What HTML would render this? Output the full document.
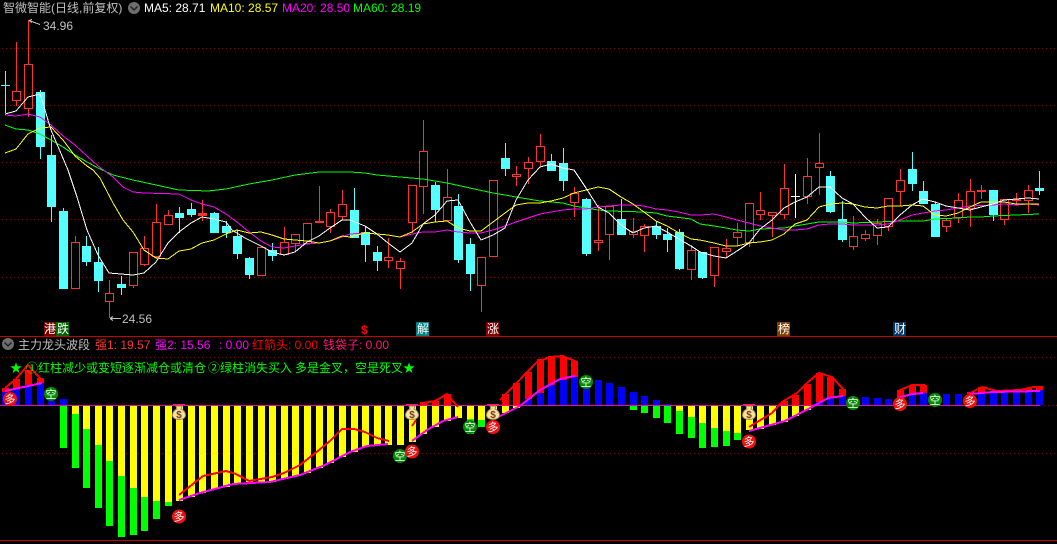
<!DOCTYPE html>
<html><head><meta charset="utf-8"><title>K线</title>
<style>
html,body{margin:0;padding:0;background:#000;width:1057px;height:544px;overflow:hidden}
svg{display:block}
text{font-family:"Liberation Sans","WenQuanYi Zen Hei","Noto Sans CJK SC",sans-serif;font-size:12px}
.c text,text.c{text-anchor:middle}
</style></head><body>
<svg width="1057" height="544" viewBox="0 0 1057 544" xmlns="http://www.w3.org/2000/svg">
<rect width="1057" height="544" fill="#000"/>
<!-- grid -->
<g stroke="#8b0000" stroke-width="1" stroke-dasharray="1 3" shape-rendering="crispEdges" fill="none">
<path d="M2 48.5H1057M2 105.5H1057M2 162.5H1057M2 219.5H1057M2 277.5H1057M2 357.5H1057M2 453.5H1057M1040 405.5H1057"/>
</g>
<g shape-rendering="crispEdges">
<!-- red candles -->
<path fill="none" stroke="#ff3232" d="M16.5 42V91M16.5 101V106M28.5 20V64M28.5 109V117M75.5 236V242M109.5 280V293M109.5 302V318M133.5 286V288M144.5 236V248M144.5 265V266M156.5 204V222M156.5 257V259M168.5 210V215M202.5 200V221M284.5 227V242M295.5 244V252M319.5 186V221M330.5 209V212M330.5 227V233M342.5 190V204M342.5 217V220M388.5 238V257M388.5 261V268M400.5 258V261M400.5 269V289M412.5 223V233M423.5 120V151M423.5 187V214M447.5 169V197M481.5 286V312M516.5 166V174M516.5 177V186M528.5 157V162M528.5 169V184M540.5 134V146M540.5 162V167M574.5 187V193M574.5 203V217M598.5 205V240M598.5 243V251M609.5 235V260M633.5 218V231M633.5 235V238M644.5 224V226M644.5 236V252M691.5 245V250M691.5 270V280M714.5 276V287M726.5 239V248M726.5 252V257M737.5 223V232M737.5 238V246M749.5 243V247M760.5 192V210M760.5 215V220M772.5 216V237M784.5 164V188M784.5 215V219M807.5 158V176M807.5 197V204M819.5 133V163M819.5 168V195M853.5 216V236M853.5 247V250M865.5 230V234M865.5 239V241M877.5 219V223M877.5 236V245M888.5 227V231M900.5 169V180M900.5 192V206M946.5 218V220M946.5 227V232M958.5 193V200M958.5 218V223M970.5 179V191M970.5 209V227M981.5 185V199M1004.5 220V225M1016.5 193V199M1016.5 201V205M1028.5 185V190M1028.5 201V213"/>
<path fill="#000" stroke="#ff3232" d="M12.5 91.5h8v9h-8zM24.5 64.5h8v44h-8zM71.5 242.5h8v46h-8zM105.5 293.5h8v8h-8zM129.5 252.5h8v33h-8zM140.5 248.5h8v16h-8zM152.5 222.5h8v34h-8zM164.5 215.5h8v9h-8zM257.5 247.5h8v28h-8zM280.5 242.5h8v12h-8zM291.5 234.5h8v9h-8zM303.5 223.5h8v20h-8zM315.5 221.5h8v1h-8zM326.5 212.5h8v14h-8zM338.5 204.5h8v12h-8zM384.5 257.5h8v3h-8zM396.5 261.5h8v7h-8zM408.5 185.5h8v37h-8zM419.5 151.5h8v35h-8zM443.5 197.5h8v23h-8zM477.5 257.5h8v28h-8zM489.5 180.5h8v76h-8zM512.5 174.5h8v2h-8zM524.5 162.5h8v6h-8zM536.5 146.5h8v15h-8zM570.5 193.5h8v9h-8zM594.5 240.5h8v2h-8zM605.5 206.5h8v28h-8zM629.5 231.5h8v3h-8zM640.5 226.5h8v9h-8zM687.5 250.5h8v19h-8zM710.5 247.5h8v28h-8zM722.5 248.5h8v3h-8zM733.5 232.5h8v5h-8zM745.5 203.5h8v39h-8zM756.5 210.5h8v4h-8zM768.5 212.5h8v3h-8zM780.5 188.5h8v26h-8zM803.5 176.5h8v20h-8zM815.5 163.5h8v4h-8zM849.5 236.5h8v10h-8zM861.5 234.5h8v4h-8zM873.5 223.5h8v12h-8zM884.5 198.5h8v28h-8zM896.5 180.5h8v11h-8zM942.5 220.5h8v6h-8zM954.5 200.5h8v17h-8zM966.5 191.5h8v17h-8zM1000.5 199.5h8v20h-8zM1012.5 199.5h8v1h-8zM1024.5 190.5h8v10h-8z"/>
<path fill="#ff3232" d="M198 213h9v3h-9zM977 190h9v2h-9z"/>
<!-- cyan candles -->
<path fill="none" stroke="#54ffff" d="M5.5 71V113M40.5 90V159M51.5 135V222M63.5 208V211M86.5 236V266M98.5 247V292M121.5 276V295M179.5 207V233M191.5 203V217M214.5 212V233M226.5 221V238M237.5 230V259M249.5 257V279M272.5 243V261M354.5 188V238M365.5 227V262M377.5 246V271M435.5 182V222M458.5 194V263M470.5 238V291M505.5 143V176M551.5 154V171M563.5 148V191M586.5 198V256M621.5 199V235M656.5 221V239M667.5 228V252M679.5 229V270M702.5 252V279M830.5 171V213M842.5 201V242M912.5 152V191M923.5 181V204M935.5 202V237M993.5 190V221M1039.5 171V195"/>
<path fill="#54ffff" d="M1 85h9v1H1zM36 92h9v55h-9zM47 155h9v52h-9zM59 211h9v78h-9zM82 246h9v16h-9zM94 262h9v19h-9zM117 284h9v4h-9zM175 213h9v5h-9zM187 209h9v6h-9zM210 213h9v20h-9zM222 226h9v7h-9zM233 236h9v18h-9zM245 258h9v17h-9zM268 250h9v6h-9zM350 210h9v28h-9zM361 232h9v13h-9zM373 252h9v9h-9zM431 185h9v25h-9zM454 206h9v54h-9zM466 244h9v30h-9zM501 158h9v11h-9zM547 161h9v10h-9zM559 163h9v18h-9zM582 199h9v55h-9zM617 219h9v16h-9zM652 226h9v9h-9zM663 234h9v6h-9zM675 232h9v37h-9zM698 252h9v26h-9zM826 176h9v36h-9zM838 219h9v21h-9zM908 169h9v15h-9zM919 191h9v13h-9zM931 204h9v33h-9zM989 190h9v25h-9zM1035 188h9v3h-9z"/>
<path fill="none" stroke="#fff" d="M795.5 174V218M791 196.500h9"/>
<!-- MAs -->
<g fill="none" stroke-width="1">
<polyline stroke="#00ff00" points="5,125 16,129 28,130 40,134 51,140 63,147 75,155 87,162 98,168 113,175 133,180 156,185 179,190 208,191 226,189 249,184 272,180 295,175 319,172 350,172 365,173 377,175 400,177 423,179 435,181 447,183 470,188 493,193 505,195 516,197 528,199 540,201 563,203 574,206 586,208 598,210 609,211 644,212 656,213 667,216 691,219 700,224 714,226 726,228 737,230 749,231 760,229 784,228 795,226 807,224 819,222 842,222 853,223 877,222 900,221 923,221 935,219 958,218 970,217 981,217 993,216 1039,214"/>
<polyline stroke="#ff00ff" points="5,115 16,116 28,114 40,117 51,125 63,136 75,145 87,156 98,166 113,177 123,187 133,192 144,193 179,194 191,200 202,204 214,207 226,214 237,222 249,232 261,241 272,247 284,248 295,246 307,244 319,243 330,241 342,237 350,234 365,233 377,234 388,235 400,237 412,234 423,232 435,232 447,230 458,232 470,233 481,233 493,230 505,226 516,222 528,218 540,214 551,212 563,210 574,209 586,209 598,207 609,206 621,205 633,205 644,206 656,209 667,210 679,212 691,215 700,215 714,214 726,217 737,220 749,223 760,226 772,228 784,230 795,230 807,229 819,225 830,224 842,224 853,225 877,225 888,224 900,220 912,215 923,213 935,211 946,210 958,208 970,206 993,205 1004,204 1016,205 1028,204 1039,205"/>
<polyline stroke="#ffff00" points="5,153 16,149 28,134 40,128 51,127 63,140 75,156 87,166 93,170 100,178 113,203 123,220 133,232 144,250 156,258 168,259 179,251 191,249 202,243 214,240 226,234 237,230 249,233 261,232 272,235 284,239 295,240 307,241 319,243 330,241 342,236 350,237 365,233 377,234 388,235 400,237 412,232 423,224 435,222 447,221 458,228 470,231 481,231 493,222 505,213 516,205 528,203 540,203 551,201 563,198 574,193 586,190 598,187 609,189 621,197 633,204 644,212 656,221 667,226 679,233 691,239 700,240 714,243 726,246 737,246 749,243 760,242 772,240 784,234 795,224 807,220 819,207 830,204 842,203 853,204 865,207 877,208 888,206 900,206 912,205 923,206 935,215 946,216 958,213 970,207 981,202 993,202 1004,202 1016,204 1028,204 1039,204"/>
<polyline stroke="#ffffff" points="5,114 16,111 28,97 40,94 45,110 51,130 68,170 77,197 87,230 98,255 109,273 133,275 144,273 156,262 168,243 179,232 191,223 202,217 214,219 226,222 232,230 245,238 261,246 272,252 284,255 295,252 307,242 319,236 330,228 342,220 350,220 365,226 377,234 388,243 400,252 412,243 423,224 435,215 447,201 458,200 470,222 481,240 493,235 505,228 516,200 528,180 540,167 551,164 563,168 574,170 586,188 598,207 609,213 621,225 633,233 644,228 656,226 667,232 679,239 691,246 700,252 714,256 726,258 737,251 749,243 760,229 772,220 784,208 795,202 807,197 819,187 830,187 842,198 853,204 865,217 877,228 888,227 900,215 912,205 923,199 935,202 946,206 958,208 970,210 981,207 993,204 1004,200 1016,199 1028,198 1039,199"/>
</g>
<!-- panel lines -->
<rect x="0" y="336" width="1057" height="1" fill="#c80000"/>
<rect x="0" y="540" width="1057" height="1" fill="#c80000"/>
<!-- sub bars -->
<g fill="none" stroke-width="7">
<path stroke="#00ff00" d="M63.5 405V448M75.500 405V468M86.500 405V488M98.500 405V508M109.500 405V526M121.500 405V537M133.500 405V535M144.500 405V531M156.500 405V519M168.500 405V506M470.500 405V434M481.500 405V427M633.500 405V410M644.500 405V413M656.500 405V418M667.500 405V423M679.500 405V434M691.500 405V438M702.500 405V448M714.500 405V447M726.500 405V446M737.500 405V440"/>
<path stroke="#ffff00" d="M75.500 405V414M86.500 405V429M98.500 405V445M109.500 405V461M121.500 405V476M133.500 405V488M144.500 405V497M156.500 405V501M168.500 405V502M179.500 405V501M191.500 405V497M202.500 405V493M214.500 405V489M226.500 405V487M237.500 405V483M249.500 405V482M261.500 405V482M272.500 405V482M284.500 405V479M295.500 405V476M307.500 405V473M319.500 405V468M330.500 405V463M342.500 405V457M354.500 405V452M365.500 405V447M377.500 405V445M388.500 405V445M400.500 405V445M412.500 405V442M423.500 405V434M435.500 405V427M447.500 405V421M458.500 405V418M470.500 405V419M481.500 405V420M493.500 405V417M505.500 405V413M516.500 405V408M679.500 405V411M691.500 405V417M702.500 405V423M714.500 405V428M726.500 405V431M737.500 405V433M749.500 405V430M760.500 405V429M772.500 405V425M784.500 405V422M795.500 405V416M807.500 405V410"/>
<path stroke="#0000ff" d="M5.500 405V392M16.500 405V389M28.500 405V385M40.500 405V383M51.500 405V401M63.500 405V399M528.500 405V399M540.500 405V393M551.500 405V385M563.500 405V380M574.500 405V377M586.500 405V383M598.500 405V380M609.500 405V383M621.500 405V387M633.500 405V392M644.500 405V396M656.500 405V400M667.500 405V404M819.500 405V402M830.500 405V398M842.500 405V396M853.500 405V397M865.500 405V397M877.500 405V398M888.500 405V399M900.500 405V398M912.500 405V395M923.500 405V393M935.500 405V394M946.500 405V394M958.500 405V394M970.500 405V394M981.500 405V393M993.500 405V393M1004.500 405V392M1016.500 405V392M1028.500 405V391M1039.500 405V390"/>
<path stroke="#ff0000" d="M5.500 388V392M16.500 379V389M28.500 370V385M40.500 378V383M423.500 402V405M435.500 401V405M447.500 394V405M505.500 394V405M516.500 383V405M528.500 372V399M540.500 359V393M551.500 356V385M563.500 357V380M574.500 361V377M784.500 401V405M795.500 395V405M807.500 384V405M819.500 373V402M830.500 377V398M842.500 389V396M900.500 390V398M912.500 386V395M923.500 385V393M970.500 392V394M981.500 387V393M993.500 391V393M1004.500 391V392M1016.500 390V392M1028.500 388V391M1039.500 387V390"/>
</g>
<rect x="0" y="405" width="1040" height="1" fill="#e0148c"/>
<!-- thick lines -->
<g fill="none" stroke="#ff0000" stroke-width="2">
<polyline points="5,388 16,379 28,365 40,378 44,382"/>
<polyline points="179,495 203,476 226,471 236,474 249,481 272,477 284,473 300,465 319,450 330,441 342,429 354,429 365,432 377,438 389,441"/>
<polyline points="412,426 416,420"/>
<polyline points="420,405 423,403 435,401 447,394 458,407"/>
<polyline points="500,400 537,362 550,357 563,356 577,362"/>
<polyline points="749,427 772,413 782,402 797,393 808,382 819,373 832,377 844,390"/>
<polyline points="898,391 912,385 925,385"/>
<polyline points="970,393 982,387 997,391 1020,390 1033,387 1043,387"/>
</g>
<g fill="none" stroke="#ff00ff" stroke-width="2">
<polyline points="5,391 42,383"/>
<polyline points="179,500 200,493 233,484 270,482 300,475 325,465 350,452 367,446 388,444"/>
<polyline points="412,441 427,430 443,421 458,417"/>
<polyline points="493,419 500,416 520,406 540,390 560,379 575,376"/>
<polyline points="749,431 785,421 810,408 828,398 843,396"/>
<polyline points="898,398 912,394 923,393"/>
<polyline points="970,394 993,392 1040,391"/>
</g>
<!-- extrema arrows -->
<path fill="none" stroke="#c0c0c0" d="M29 20.500L40 24.500M29 20.500l3 -1M29 20.500l3 2M110 318.500H121M110 318.500l3 -2M110 318.500l3 2"/>
<!-- concept tags -->
<rect x="44" y="322" width="12" height="14" fill="#7a0000"/>
<rect x="56" y="322" width="13" height="14" fill="#006400"/>
<rect x="416" y="322" width="13" height="14" fill="#008080"/>
<rect x="486" y="322" width="13" height="14" fill="#800000"/>
<rect x="777" y="322" width="13" height="14" fill="#804000"/>
<rect x="893" y="322" width="13" height="14" fill="#003366"/>
</g>
<g fill="#fff">
<text x="44" y="333">港</text><text x="57" y="333">跌</text>
<text x="417" y="333">解</text><text x="487" y="333">涨</text>
<text x="778" y="333">榜</text><text x="894" y="333">财</text>
</g>
<text x="361" y="334" fill="#ff0000" style="font-weight:bold">$</text>
<!-- header -->
<text x="3" y="12" fill="#c0c0c0">智微智能(日线,前复权)</text>
<circle cx="134" cy="8" r="6" fill="#6e6e6e"/>
<path d="M130.500 6.500L134 10l3.500 -3.500" fill="none" stroke="#222" stroke-width="1.500"/>
<text x="144" y="12" fill="#fff">MA5: 28.71</text>
<text x="210" y="12" fill="#ffff00">MA10: 28.57</text>
<text x="282" y="12" fill="#ff00ff">MA20: 28.50</text>
<text x="353" y="12" fill="#00ff00">MA60: 28.19</text>
<text x="43" y="30" fill="#c0c0c0">34.96</text>
<text x="122" y="323" fill="#c0c0c0">24.56</text>
<!-- sub header -->
<circle cx="8" cy="344" r="6" fill="#6e6e6e"/>
<path d="M4.500 342.500L8 346l3.500 -3.500" fill="none" stroke="#222" stroke-width="1.500"/>
<text x="18" y="349" fill="#c0c0c0">主力龙头波段</text>
<text x="95" y="349" fill="#ff3232">强1: 19.57</text>
<text x="155" y="349" fill="#ff00ff">强2: 15.56</text>
<text x="219" y="349" fill="#ff00ff">: 0.00</text>
<text x="252" y="349" fill="#ff0000">红箭头: 0.00</text>
<text x="323" y="349" fill="#ff1478">钱袋子: 0.00</text>
<g fill="#00ff00">
<text x="10" y="372">★</text>
<text x="26" y="372">①红柱减少或变短逐渐减仓或清仓</text>
<text x="208" y="372">②绿柱消失买入</text>
<text x="295" y="372">多是金叉，</text>
<text x="355" y="372">空是死叉</text>
<text x="403" y="372">★</text>
</g>
<!-- money bags -->
<g>
<g id="b1">
<path d="M173 404.500H185" stroke="#ff1478" stroke-width="1"/>
<path d="M176 406h6l-1 3c3 1 4.500 4 4.500 6 0 3 -3 4.500 -6.500 4.500s-6.500 -1.500 -6.500 -4.500c0 -2 1.500 -5 4.500 -6z" fill="#f5e3a0" stroke="#a88a4a"/>
<text x="179" y="418" fill="#7a3a1a" text-anchor="middle" style="font-size:10px;font-weight:bold">$</text>
</g>
<g transform="translate(233,2)">
<path d="M173 402.500H185" stroke="#ff1478" stroke-width="1"/>
<path d="M176 404h6l-1 3c3 1 4.500 4 4.500 6 0 3 -3 4.500 -6.500 4.500s-6.500 -1.500 -6.500 -4.500c0 -2 1.500 -5 4.500 -6z" fill="#f5e3a0" stroke="#a88a4a"/>
<text x="179" y="416" fill="#7a3a1a" text-anchor="middle" style="font-size:10px;font-weight:bold">$</text>
</g>
<g transform="translate(314,2)">
<path d="M173 402.500H185" stroke="#ff1478" stroke-width="1"/>
<path d="M176 404h6l-1 3c3 1 4.500 4 4.500 6 0 3 -3 4.500 -6.500 4.500s-6.500 -1.500 -6.500 -4.500c0 -2 1.500 -5 4.500 -6z" fill="#f5e3a0" stroke="#a88a4a"/>
<text x="179" y="416" fill="#7a3a1a" text-anchor="middle" style="font-size:10px;font-weight:bold">$</text>
</g>
<g transform="translate(570,2)">
<path d="M173 402.500H185" stroke="#ff1478" stroke-width="1"/>
<path d="M176 404h6l-1 3c3 1 4.500 4 4.500 6 0 3 -3 4.500 -6.500 4.500s-6.500 -1.500 -6.500 -4.500c0 -2 1.500 -5 4.500 -6z" fill="#f5e3a0" stroke="#a88a4a"/>
<text x="179" y="416" fill="#7a3a1a" text-anchor="middle" style="font-size:10px;font-weight:bold">$</text>
</g>
</g>
<!-- 空 -->
<g fill="#008a00">
<circle cx="51" cy="394" r="7"/><circle cx="400" cy="456" r="7"/><circle cx="470" cy="427" r="7"/><circle cx="586" cy="382" r="7"/><circle cx="853" cy="403" r="7"/><circle cx="935" cy="400" r="7"/>
</g>
<g fill="#fff" text-anchor="middle" style="font-size:11px">
<text x="51" y="398" style="font-size:11px">空</text><text x="400" y="460" style="font-size:11px">空</text><text x="470" y="431" style="font-size:11px">空</text><text x="586" y="386" style="font-size:11px">空</text><text x="853" y="407" style="font-size:11px">空</text><text x="935" y="404" style="font-size:11px">空</text>
</g>
<!-- 多 -->
<g fill="#f01010">
<circle cx="10" cy="399" r="7"/><circle cx="179" cy="516.500" r="7"/><circle cx="412" cy="451.500" r="7"/><circle cx="493" cy="427" r="7"/><circle cx="749" cy="441.500" r="7"/><circle cx="900" cy="404" r="7"/><circle cx="970" cy="401" r="7"/>
</g>
<g fill="#fff" text-anchor="middle">
<text x="10" y="403" style="font-size:11px">多</text><text x="179" y="520.500" style="font-size:11px">多</text><text x="412" y="455.500" style="font-size:11px">多</text><text x="493" y="431" style="font-size:11px">多</text><text x="749" y="445.500" style="font-size:11px">多</text><text x="900" y="408" style="font-size:11px">多</text><text x="970" y="405" style="font-size:11px">多</text>
</g>
</svg>
</body></html>
